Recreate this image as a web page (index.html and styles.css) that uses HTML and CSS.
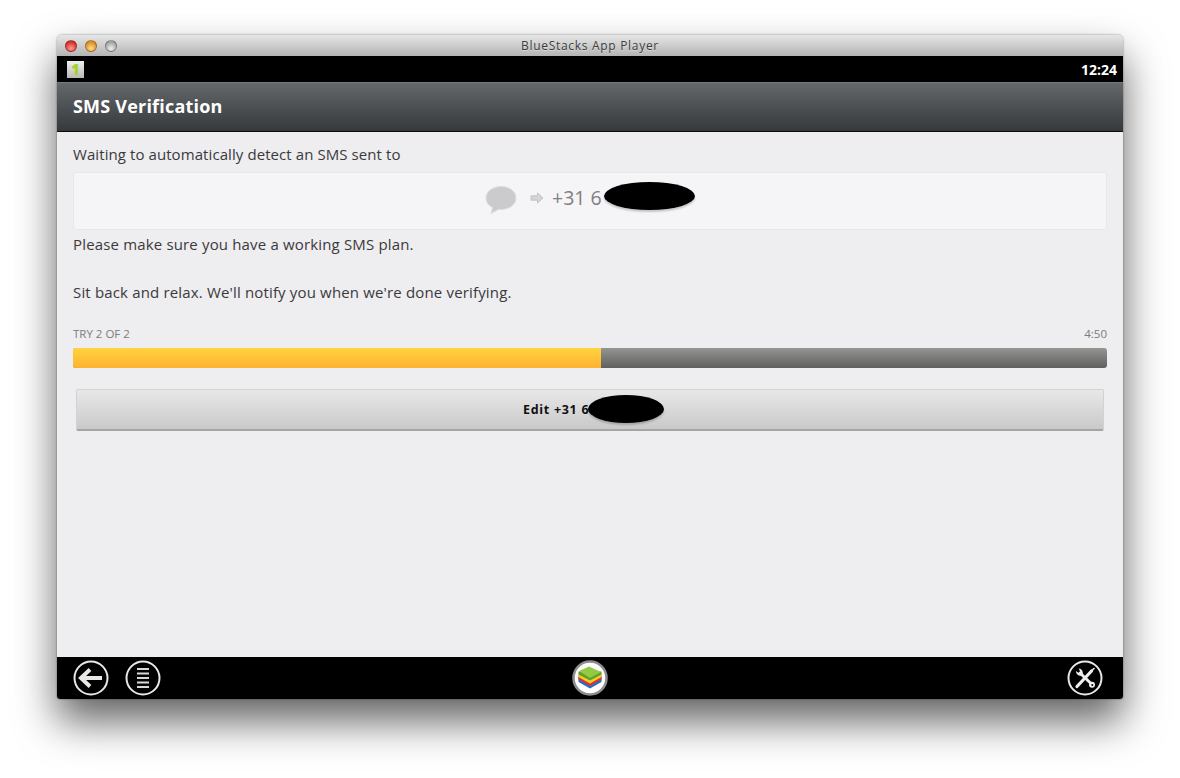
FILE: index.html
```html
<!DOCTYPE html>
<html lang="en">
<head>
    <meta charset="UTF-8">
    <title>BlueStacks App Player</title>
    <link rel="stylesheet" href="styles.css">
</head>
<body>

<div class="window">
    <div class="titlebar">
        <div class="lights">
            <span class="light red"></span>
            <span class="light orange"></span>
            <span class="light grey"></span>
        </div>
        <div class="title">BlueStacks App Player</div>
    </div>

    <div class="statusbar">
        <span class="notif">1</span>
        <span class="clock">12:24</span>
    </div>

    <div class="actionbar">SMS Verification</div>

    <div class="content">
        <p class="line first-line">Waiting to automatically detect an SMS sent to</p>
        <div class="number-box">
            <svg class="bubble" width="32" height="30" viewBox="0 0 32 30">
                <path d="M16 1.500C7.500 1.500 1 6.500 1 13c0 4.500 2.500 7.500 6.500 9.500L6 28.500 13.500 24.500c.8 0 1.700 0 2.500 0 8.500 0 15-5 15-11.500S24.500 1.500 16 1.500z" fill="#cbcacc" stroke="#dfdee0" stroke-width="1"/>
            </svg>
            <svg class="arrow" width="14" height="12" viewBox="0 0 14 12">
                <path d="M1 3.800h6.500V1L13 6l-5.500 5V8.200H1z" fill="#d4d3d5" stroke="#bcbbbd" stroke-width="0.800"/>
            </svg>
            <span class="phone">+31 6</span>
            <span class="blot blot-large"></span>
        </div>
        <p class="line after-box">Please make sure you have a working SMS plan.</p>
        <p class="line after-gap">Sit back and relax. We'll notify you when we're done verifying.</p>

        <div class="progress-labels">
            <span>TRY 2 OF 2</span>
            <span>4:50</span>
        </div>
        <div class="progress">
            <div class="progress-fill" style="width: 51.1%"></div>
        </div>

        <div class="edit-btn">
            <span>Edit +31 6</span>
            <span class="blot blot-small"></span>
        </div>
    </div>

    <div class="navbar">
        <div class="nav-left">
            <svg width="36" height="36" viewBox="0 0 36 36">
                <circle cx="18" cy="18" r="16.500" fill="none" stroke="#e8e8e8" stroke-width="2"/>
                <path d="M17 9.500 8 18l9 8.500" fill="none" stroke="#e8e8e6" stroke-width="4"/>
                <path d="M9 18h20" stroke="#e8e8e6" stroke-width="4"/>
            </svg>
            <svg width="36" height="36" viewBox="0 0 36 36">
                <circle cx="18" cy="18" r="16.500" fill="none" stroke="#e8e8e8" stroke-width="2"/>
                <path d="M12 9h12M12 13.500h12M12 18h12M12 22.500h12M12 27h12" stroke="#d8d8d8" stroke-width="2.200"/>
            </svg>
        </div>
        <div class="nav-center">
            <svg width="36" height="36" viewBox="0 0 36 36">
                <circle cx="18" cy="18" r="16.500" fill="#fff" stroke="#8d8d8d" stroke-width="2.500"/>
                <path d="M6.500 17v5l11.500 6.500L29.500 22v-5z" fill="#2a6cc4"/>
                <path d="M6.500 15v4.500l11.500 6.500 11.500-6.500V15z" fill="#d9352f"/>
                <path d="M6.500 13v4l11.500 6.500L29.500 17v-4z" fill="#f0cf2a"/>
                <path d="M6.500 11.500v3l11.500 6 11.500-6v-3z" fill="#5f9f2c"/>
                <path d="M7 11 17 6.500 29 12l-11 6z" fill="#92cb43"/>
            </svg>
        </div>
        <div class="nav-right">
            <svg width="36" height="36" viewBox="0 0 36 36">
                <circle cx="18" cy="18" r="16.500" fill="none" stroke="#e8e8e8" stroke-width="2"/>
                <path d="M10 26.500 24.500 11" stroke="#eee" stroke-width="3.200" stroke-linecap="round"/>
                <path d="M27 8.500 24 11.500" stroke="#eee" stroke-width="1.600" stroke-linecap="round"/>
                <path d="M13.500 13.500 24.500 24" stroke="#eee" stroke-width="3"/>
                <path d="M9 11a4.300 4.300 0 0 0 5.500 4.500l1-1a4.300 4.300 0 0 0-3.800-6l1.300 2.700-1.500 1.500z" fill="#eee"/>
                <circle cx="25" cy="24.800" r="3" fill="#eee"/>
                <circle cx="25.300" cy="25.100" r="1" fill="#000"/>
            </svg>
        </div>
    </div>
</div>

</body>
</html>
```

FILE: styles.css
```css
html, body {
    margin: 0;
    padding: 0;
}
body {
    width: 1180px;
    height: 778px;
    overflow: hidden;
    background-color: #fff;
    font-family: "Open Sans", "Noto Sans", sans-serif;
    padding: 35px 0 0 57px;
    box-sizing: border-box;
}
.window {
    width: 1066px;
    height: 664px;
    display: flex;
    flex-direction: column;
    border-radius: 5px 5px 3px 3px;
    overflow: hidden;
    box-shadow: 0 22px 42px rgba(0, 0, 0, 0.62), 0 0 2px rgba(0, 0, 0, 0.5);
}
.titlebar {
    height: 21px;
    flex: none;
    position: relative;
    background: linear-gradient(#e6e6e6, #b4b4b4);
    display: flex;
    align-items: center;
    justify-content: center;
}
.lights {
    position: absolute;
    left: 8px;
    top: 5px;
    display: flex;
    gap: 8px;
}
.light {
    width: 12px;
    height: 12px;
    border-radius: 50%;
    box-sizing: border-box;
    border: 1px solid rgba(0, 0, 0, 0.3);
}
.red {
    background: radial-gradient(circle at 50% 75%, #ff9a94, #d8312c 70%);
}
.orange {
    background: radial-gradient(circle at 50% 75%, #ffdc8a, #e08e26 70%);
}
.grey {
    background: radial-gradient(circle at 50% 75%, #f0f0f0, #a4a4a4 70%);
}
.title {
    font-size: 12px;
    color: #3c3c3c;
    letter-spacing: 0.7px;
    text-shadow: 0 1px 0 rgba(255, 255, 255, 0.4);
}
.statusbar {
    height: 26px;
    flex: none;
    background-color: #000;
    display: flex;
    align-items: center;
    justify-content: space-between;
    padding: 0 6px 0 10px;
    box-sizing: border-box;
}
.notif {
    width: 17px;
    height: 17px;
    background: linear-gradient(#f0f0ee, #b8b8b4);
    color: #a4d12a;
    font-size: 15px;
    font-weight: 800;
    line-height: 17px;
    text-align: center;
}
.clock {
    color: #fff;
    font-size: 14px;
    font-weight: 700;
}
.actionbar {
    height: 50px;
    flex: none;
    box-sizing: border-box;
    border-top: 1px solid #77797b;
    border-bottom: 1px solid #0c0c0c;
    background: linear-gradient(#65686b, #35393c);
    color: #fff;
    font-size: 18px;
    font-weight: 700;
    letter-spacing: 0.2px;
    line-height: 46px;
    padding-left: 16px;
}
.content {
    flex: 1;
    background-color: #eeedf0;
    padding: 11px 16px 0;
    color: #3a3a3c;
}
.line {
    margin: 0;
    font-size: 15px;
    letter-spacing: 0.16px;
    line-height: 22px;
}
.first-line {
    letter-spacing: 0.08px;
}
.number-box {
    height: 58px;
    margin-top: 7px;
    box-sizing: border-box;
    background-color: #f5f4f6;
    border: 1px solid #e8e7ea;
    border-radius: 3px;
    display: flex;
    align-items: center;
    padding: 0 0 8px 411px;
}
.bubble {
    margin-top: 6px;
}
.arrow {
    margin: 2px 0 0 13px;
}
.phone {
    margin-left: 8px;
    font-size: 19.500px;
    color: #808082;
}
.blot {
    display: block;
    background-color: #000;
    border-radius: 50%;
    box-shadow: 0 2px 2px rgba(0, 0, 0, 0.2);
}
.blot-large {
    width: 91px;
    height: 28px;
    margin-left: 2px;
    margin-top: -3px;
}
.after-box {
    margin-top: 3px;
}
.after-gap {
    margin-top: 26px;
}
.progress-labels {
    display: flex;
    justify-content: space-between;
    margin-top: 23px;
    font-size: 11.500px;
    line-height: 15px;
    color: #7c7c7e;
}
.progress {
    height: 20px;
    margin-top: 7px;
    border-radius: 3px;
    overflow: hidden;
    background: linear-gradient(#959594, #5f605e);
}
.progress-fill {
    height: 100%;
    background: linear-gradient(#ffd33f, #fdb22f);
}
.edit-btn {
    height: 42px;
    margin: 21px 3px 0;
    box-sizing: border-box;
    border: 1px solid #d2d1d3;
    border-bottom: 2px solid #a5a5a6;
    border-radius: 2px;
    background: linear-gradient(#e8e8e8, #c9c9c9);
    display: flex;
    align-items: center;
    padding-left: 446px;
    font-size: 12.500px;
    font-weight: 700;
    color: #111;
    letter-spacing: 0.7px;
}
.blot-small {
    width: 76px;
    height: 28px;
    margin: -2px 0 0 -1px;
}
.navbar {
    height: 42px;
    flex: none;
    background-color: #000;
    display: grid;
    grid-template-columns: 1fr auto 1fr;
    align-items: center;
    padding: 0 20px 0 16px;
}
.nav-left {
    display: flex;
    gap: 16px;
}
.nav-center {
    display: flex;
    padding-left: 4px;
}
.nav-right {
    display: flex;
    justify-content: flex-end;
}
```
